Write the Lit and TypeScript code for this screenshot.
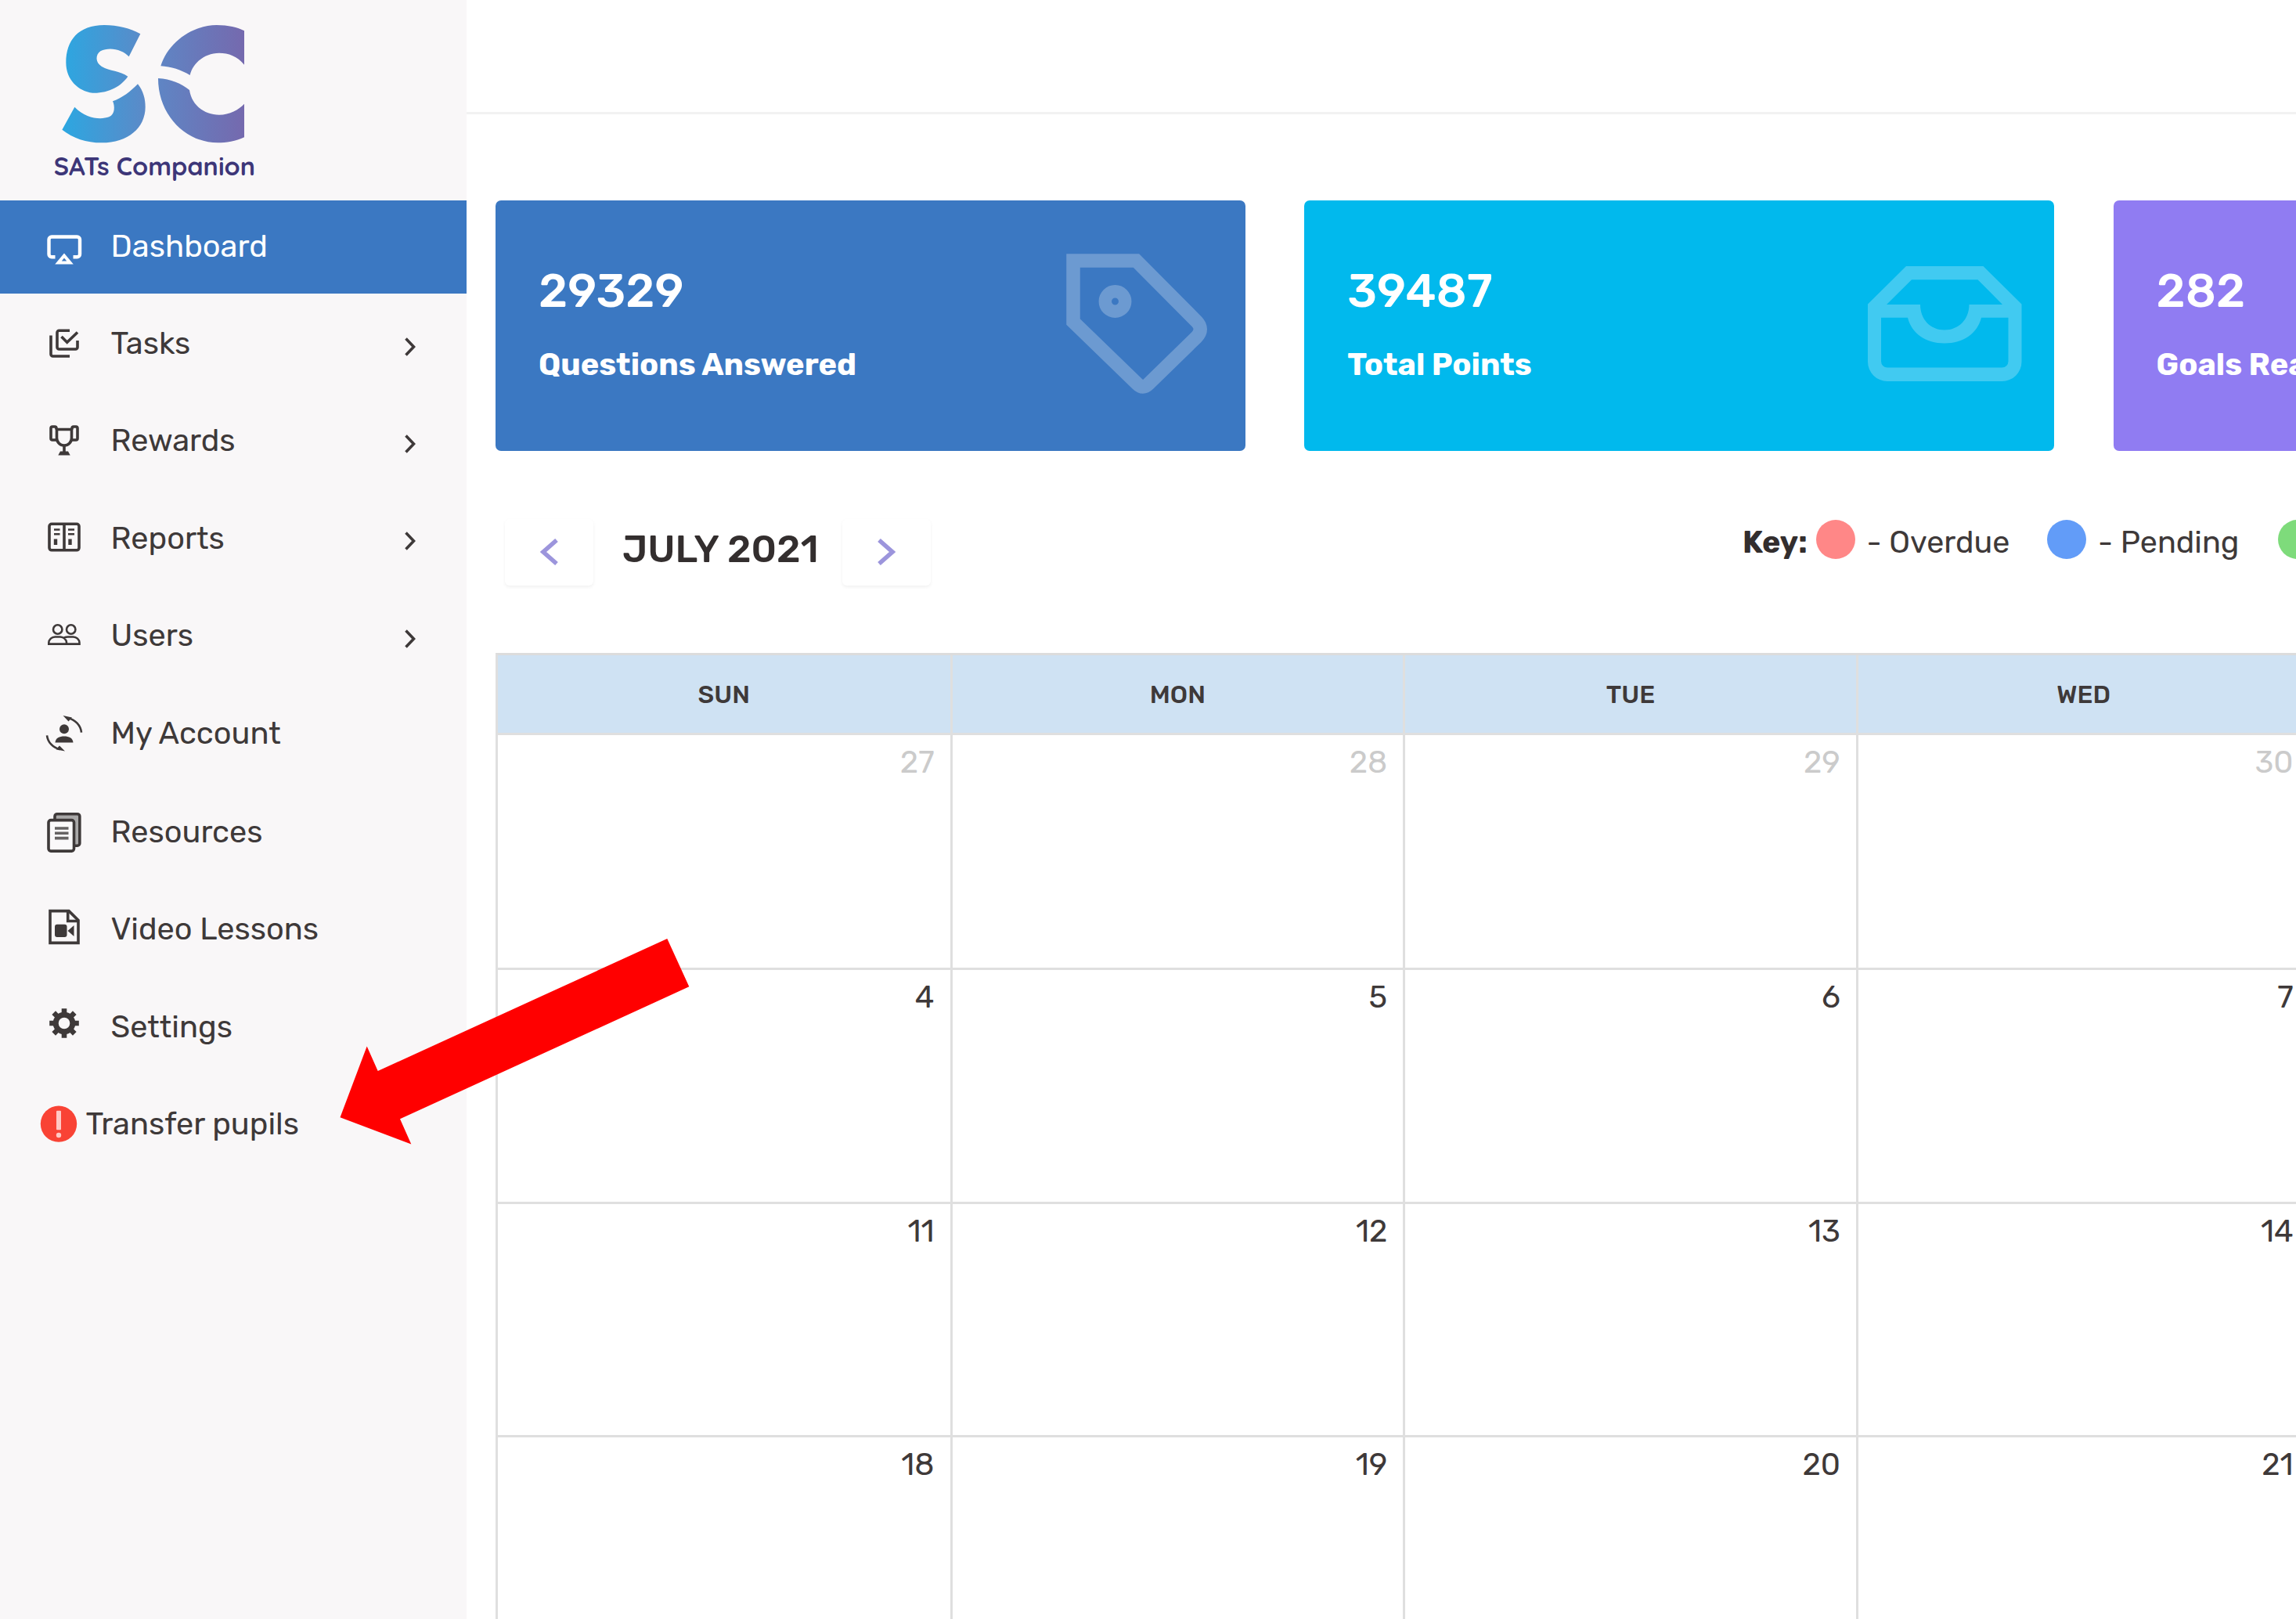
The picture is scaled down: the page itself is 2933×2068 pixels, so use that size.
import { LitElement, css, html, svg } from 'lit'
import { customElement, property, state } from 'lit/decorators.js'
import { map } from 'lit/directives/map.js'
import { classMap } from 'lit/directives/class-map.js'

const icons: Record<string, unknown> = {
    dashboard: svg`
        <path d="M12.500 36.300H8a3.500 3.500 0 0 1-3.500-3.500V14a3.500 3.500 0 0 1 3.500-3.500H40.500a3.500 3.500 0 0 1 3.500 3.500V32.800a3.500 3.500 0 0 1-3.500 3.500H35.500" stroke-width="4.400"/>
        <path d="M24 34.500L16.500 43.500H31.500Z" stroke-width="4"/>`,
    tasks: svg`
        <path d="M31 5.200H17.500a2.500 2.500 0 0 0-2.500 2.500V26.500a2.500 2.500 0 0 0 2.500 2.500H38.500a2.500 2.500 0 0 0 2.500-2.500V18"/>
        <path d="M7 11.500V35.500a2.500 2.500 0 0 0 2.500 2.500H31"/>
        <path d="M20.500 13L27.700 20.300L41 7.500"/>`,
    rewards: svg`
        <path d="M14.500 7.500H33.500V18.500a9.500 9.500 0 0 1-19 0Z"/>
        <path d="M14 7.500V6a2 2 0 0 0-2-2H9a2 2 0 0 0-2 2V19a2 2 0 0 0 2 2h5.500"/>
        <path d="M34 7.500V6a2 2 0 0 1 2-2h3a2 2 0 0 1 2 2V19a2 2 0 0 1-2 2h-5.500"/>
        <path d="M24 28V36" />
        <path d="M19 35.500H29L31.700 40.500H16.300Z" fill="currentColor" stroke="none"/>`,
    reports: svg`
        <rect x="5" y="4.300" width="38" height="33.500" rx="3"/>
        <path d="M24 4V38"/>
        <path d="M11 11.500H18.500M11 17.200H18.500M29 11.500H37M29 17.200H37" stroke-width="2.600"/>
        <path d="M13 23.500V31M31.500 23.500V31" stroke-width="4.400"/>`,
    users: svg`
        <circle cx="15.700" cy="14" r="5.700" stroke-width="2.600"/>
        <circle cx="32.700" cy="14" r="5.700" stroke-width="2.600"/>
        <path d="M4.300 32.600V31a8 8 0 0 1 8-7.500H19a8 8 0 0 1 8 7.500V32.600ZM24 24.500c1.500-.7 3-1 5-1H35.500a8 8 0 0 1 8 7.500V32.600H27" stroke-width="2.600"/>`,
    account: svg`
        <circle cx="24" cy="17.200" r="6" fill="currentColor" stroke="none"/>
        <path d="M12.500 34.600C13 28.500 18 26.500 24 26.500S35 28.500 35.500 34.600Z" fill="currentColor" stroke="none"/>
        <path d="M29 3.200C38 5 45 12.500 46 21.600M2 25.300C3 34 9.500 41 18.500 43.200" stroke-width="2.600"/>
        <path d="M22.500 0L34 2.500L29.500 7.500ZM25 45.500L13.500 43.200L18 38.500Z" fill="currentColor" stroke="none"/>`,
    resources: svg`
        <rect x="12" y="-1.300" width="31.800" height="40.500" rx="3" fill="#a9a8a8"/>
        <rect x="4" y="6.600" width="32.500" height="39.500" rx="3" fill="#faf9fa"/>
        <path d="M12 17H29.500M12 23.300H29.500M12 29.600H29.500" stroke="#666363"/>`,
    video: svg`
        <path d="M6 -1.400H30L42 10.500V39.400H6Z"/>
        <path d="M28.700 -1V11.500H42"/>
        <rect x="12" y="15.800" width="15.500" height="16.200" rx="3" fill="currentColor" stroke="none"/>
        <path d="M28.500 24L36.500 17V31Z" fill="currentColor" stroke="none"/>`,
    settings: svg`
        <circle cx="24" cy="18" r="10.800" stroke-width="7"/>
        <path d="M24 -.8V6M24 30V36.800M5.200 18H12M36 18H42.800M10.700 4.700L15.500 9.500M32.500 26.500L37.300 31.300M10.700 31.300L15.500 26.500M32.500 9.500L37.300 4.700" stroke-width="6.600"/>`,
    alert: svg`
        <circle cx="24" cy="21.600" r="23.200" fill="#f94335" stroke="none"/>
        <rect x="21" y="4.800" width="6" height="24.500" rx="1" fill="#ffc9c4" stroke="none"/>
        <circle cx="24" cy="36" r="3.200" fill="#ffc9c4" stroke="none"/>`,
}

const cardIcons: Record<string, unknown> = {
    tag: svg`
        <path d="M9 9H89.500L166.500 86.500Q176 96.500 166.500 106.500L105 166.500Q98 173.500 91 166.500L9 87Z" fill="none" stroke="currentColor" stroke-width="17.500"/>
        <circle cx="62.500" cy="61" r="12.700" fill="none" stroke="currentColor" stroke-width="16.500"/>`,
    inbox: svg`
        <path fill="currentColor" fill-rule="evenodd" d="M49 0H147.500L196.500 48.500V122a25 25 0 0 1-25 25H25a25 25 0 0 1-25-25V48.500Z
            M56 17.200L24 49H67C67 68 80 81.500 98 81.500S129.500 68 129.500 49H172L140.500 17.200Z
            M17 65.800V121.500a8 8 0 0 0 8 8H171.500a8 8 0 0 0 8-8V65.800H145C140 86 122 98.500 98 98.500S56 86 51 65.800Z"/>`,
}

interface NavItem {
    label: string
    icon: string
    more?: boolean
    alert?: boolean
}

@customElement('side-nav')
export class SideNav extends LitElement {
    static styles = css`
        :host {
            display: block;
            flex: none;
            width: 596px;
            height: 100%;
            background-color: #f9f7f8;
            color: #3e3939;
        }

        .logo {
            display: block;
            width: 300px;
            height: 220px;
            padding: 20px 0 16px 50px;
        }

        .item {
            display: flex;
            align-items: center;
            box-sizing: border-box;
            height: 119.4px;
            margin-bottom: 5px;
            padding: 0 65px 0 58px;
            font-size: 39.7px;
            white-space: nowrap;
        }

        .item.active {
            background-color: #3b78c2;
            color: #fff;
        }

        .item.resources {
            margin-top: 7px;
        }

        .item.alert {
            padding-left: 50.500px;
        }

        .icon {
            flex: none;
            width: 48px;
            height: 48px;
            margin: 1px 35.500px 0 0;
            overflow: visible;
            fill: none;
            stroke: currentColor;
            stroke-width: 3.6;
        }

        .alert .icon {
            margin-right: 11px;
        }

        .label {
            flex: 1;
            padding-bottom: 3px;
        }

        .chevron {
            width: 14px;
            height: 24px;
            margin-top: 5px;
            fill: none;
            stroke: currentColor;
            stroke-width: 3.6;
        }
    `

    @property({ type: Array }) items: NavItem[] = []
    @state() active = 'Dashboard'

    private logo() {
        return html`
            <svg class="logo" viewBox="0 0 900 660">
                <defs>
                    <linearGradient id="brand" gradientUnits="userSpaceOnUse" x1="88" y1="0" x2="786" y2="0">
                        <stop offset="0" stop-color="#2ca7e1"/>
                        <stop offset="0.45" stop-color="#5b8ac8"/>
                        <stop offset="1" stop-color="#7569ae"/>
                    </linearGradient>
                </defs>
                <g fill="url(#brand)">
                    <path d="M388 70C350 48 300 36 250 36C150 36 103 95 103 180C103 245 150 290 205 296C265 298 315 270 340 233C310 212 270 212 240 195C215 180 215 150 235 136C270 118 320 130 344 157Z"/>
                    <path d="M136 350C180 395 235 400 268 388C292 378 290 345 282 328C320 315 350 290 378 262C400 290 407 320 407 350C407 430 340 487 240 487C180 487 130 470 88 437Z"/>
                    <path d="M466 193C495 100 590 36 680 36C725 36 760 45 786 58V188C760 155 725 143 690 143C635 143 590 180 578 228C545 208 505 195 466 193Z"/>
                    <path d="M456 240C505 243 545 260 576 285C585 345 635 380 690 380C730 380 765 360 786 338V466C755 482 715 487 685 487C560 487 456 380 456 240Z"/>
                </g>
                <text x="56" y="611" font-family="Quicksand, Lato, sans-serif" font-weight="700" font-size="97" fill="#3d3678"
                      textLength="772" lengthAdjust="spacingAndGlyphs">SATs Companion</text>
            </svg>`
    }

    render() {
        return html`
            ${this.logo()}
            ${map(this.items, (item) => html`
                <div
                        class="${classMap({
                            item: true,
                            active: item.label == this.active,
                            alert: !!item.alert,
                            resources: item.icon == 'resources',
                        })}"
                        @click="${() => this.active = item.label}"
                >
                    <svg class="icon" viewBox="0 0 48 48">${icons[item.icon]}</svg>
                    <span class="label">${item.label}</span>
                    ${item.more ? html`
                        <svg class="chevron" viewBox="0 0 14 24"><path d="M1.500 1.500L11.500 12L1.500 22.500"/></svg>
                    ` : ''}
                </div>
            `)}`
    }
}

@customElement('stat-card')
export class StatCard extends LitElement {
    static styles = css`
        :host {
            display: flex;
            justify-content: space-between;
            box-sizing: border-box;
            height: 320px;
            padding: 0 48px 0 55px;
            border-radius: 7px;
            color: #fff;
            white-space: nowrap;
        }

        .value {
            padding-top: 80px;
            font-size: 60px;
            font-weight: 500;
            line-height: 72px;
        }

        .label {
            margin-top: 34px;
            font-size: 39.7px;
            font-weight: 700;
            line-height: 48px;
        }

        .art {
            flex: none;
            opacity: 0.25;
        }

        .tag {
            width: 181px;
            height: 180px;
            margin-top: 68px;
        }

        .inbox {
            width: 197px;
            height: 147px;
            margin: 84px -7px 0 0;
        }
    `

    @property() value = ''
    @property() label = ''
    @property() icon = ''

    render() {
        return html`
            <div>
                <div class="value">${this.value}</div>
                <div class="label">${this.label}</div>
            </div>
            ${this.icon == 'tag' ? html`<svg class="art tag" viewBox="0 0 181 180">${cardIcons.tag}</svg>` : ''}
            ${this.icon == 'inbox' ? html`<svg class="art inbox" viewBox="0 0 197 147">${cardIcons.inbox}</svg>` : ''}
        `
    }
}

@customElement('month-calendar')
export class MonthCalendar extends LitElement {
    static styles = css`
        :host {
            display: block;
            color: #3e3939;
        }

        .toolbar {
            display: flex;
            align-items: center;
            height: 85px;
            margin: 0 0 86.500px 12px;
            white-space: nowrap;
        }

        .nav {
            display: flex;
            flex: none;
            align-items: center;
            justify-content: center;
            width: 113px;
            height: 85px;
            padding: 0;
            border: 0;
            border-radius: 6px;
            background-color: #fff;
            box-shadow: 0 2px 4px rgba(0, 0, 0, 0.06);
            color: #9c95dc;
        }

        .nav svg {
            width: 24px;
            height: 34px;
            fill: none;
            stroke: currentColor;
            stroke-width: 5.5;
        }

        .title {
            flex: none;
            box-sizing: border-box;
            width: 317.500px;
            padding: 0 0 8px 37px;
            color: #332e2e;
            font-size: 49.5px;
            font-weight: 500;
        }

        .legend {
            display: flex;
            align-items: center;
            margin-left: 1037.500px;
            padding-bottom: 26px;
            font-size: 39.5px;
        }

        .key {
            flex: none;
            width: 93.500px;
            color: #332e2e;
            font-weight: 700;
        }

        .entry {
            display: flex;
            flex: none;
            align-items: center;
            gap: 15px;
            width: 295.400px;
        }

        .dot {
            width: 50px;
            height: 50px;
            margin-bottom: 7px;
            border-radius: 50%;
        }

        .overdue {
            background-color: #ff8787;
        }

        .pending {
            background-color: #629cf8;
        }

        .complete {
            background-color: #7edb7b;
        }

        .grid {
            display: grid;
            grid-template-columns: 580.500px repeat(3, 578.700px);
            grid-template-rows: 102px 300px repeat(3, 298.600px);
            width: max-content;
            border-top: 3px solid #dcdcdc;
            border-left: 3px solid #dfdfdf;
        }

        .head,
        .day {
            box-sizing: border-box;
            border-right: 3px solid #dfdfdf;
            border-bottom: 3px solid #dfdfdf;
        }

        .head {
            display: flex;
            align-items: center;
            justify-content: center;
            background-color: #cfe2f3;
            font-size: 32.2px;
            font-weight: 500;
        }

        .day {
            padding: 11px 20px 0 0;
            font-size: 39.7px;
            line-height: 47px;
            text-align: right;
        }

        .other {
            color: #cbcbcb;
        }
    `

    @property() month = ''
    @property({ type: Array }) columns: string[] = []
    @property({ type: Array }) days: number[] = []

    private legend() {
        return html`
            <div class="legend">
                <span class="key">Key:</span>
                <div class="entry"><span class="dot overdue"></span>- Overdue</div>
                <div class="entry"><span class="dot pending"></span>- Pending</div>
                <div class="entry"><span class="dot complete"></span></div>
            </div>`
    }

    render() {
        return html`
            <div class="toolbar">
                <button class="nav"><svg viewBox="0 0 24 34"><path d="M21 2L4 17L21 32"/></svg></button>
                <div class="title">${this.month}</div>
                <button class="nav"><svg viewBox="0 0 24 34"><path d="M3 2L20 17L3 32"/></svg></button>
                ${this.legend()}
            </div>
            <div class="grid">
                ${map(this.columns, (name) => html`<div class="head">${name}</div>`)}
                ${map(this.days, (day, i) => html`
                    <div class="${classMap({ day: true, other: i < 4 && day > 7 })}">${day}</div>
                `)}
            </div>`
    }
}

@customElement('app-root')
export class AppRoot extends LitElement {
    static styles = css`
        :host {
            display: flex;
            position: relative;
            width: 100%;
            height: 2068px;
            overflow: hidden;
            background-color: #fff;
            font-family: Rubik, Roboto, sans-serif;
        }

        .main {
            flex: 1;
            min-width: 0;
            overflow: hidden;
        }

        .topbar {
            box-sizing: border-box;
            height: 146px;
            border-bottom: 3px solid #f2f2f2;
        }

        .content {
            padding: 110px 0 0 37px;
        }

        .cards {
            display: grid;
            grid-template-columns: repeat(3, 958px);
            gap: 75.300px;
            margin-bottom: 86.500px;
        }

        .blue {
            background-color: #3b78c2;
        }

        .cyan {
            background-color: #01b9ed;
        }

        .purple {
            background-color: #907cf2;
        }

        .pointer {
            position: absolute;
            left: 434px;
            top: 1199px;
            width: 447px;
            height: 263px;
        }
    `

    @state() items: NavItem[] = [
        { label: 'Dashboard', icon: 'dashboard' },
        { label: 'Tasks', icon: 'tasks', more: true },
        { label: 'Rewards', icon: 'rewards', more: true },
        { label: 'Reports', icon: 'reports', more: true },
        { label: 'Users', icon: 'users', more: true },
        { label: 'My Account', icon: 'account' },
        { label: 'Resources', icon: 'resources' },
        { label: 'Video Lessons', icon: 'video' },
        { label: 'Settings', icon: 'settings' },
        { label: 'Transfer pupils', icon: 'alert', alert: true },
    ]

    @state() days = [
        27, 28, 29, 30,
        4, 5, 6, 7,
        11, 12, 13, 14,
        18, 19, 20, 21,
    ]

    render() {
        return html`
            <side-nav .items="${this.items}"></side-nav>
            <div class="main">
                <div class="topbar"></div>
                <div class="content">
                    <div class="cards">
                        <stat-card class="blue" value="29329" label="Questions Answered" icon="tag"></stat-card>
                        <stat-card class="cyan" value="39487" label="Total Points" icon="inbox"></stat-card>
                        <stat-card class="purple" value="282" label="Goals Reached"></stat-card>
                    </div>
                    <month-calendar
                            month="JULY 2021"
                            .columns="${['SUN', 'MON', 'TUE', 'WED']}"
                            .days="${this.days}"
                    ></month-calendar>
                </div>
            </div>
            <svg class="pointer" viewBox="434 1199 447 263">
                <path fill="#f00" d="M852.300 1199L880.300 1260.300L511 1429.300L525.300 1461.500L434.500 1427.300L468.700 1336.500L482.700 1368Z"/>
            </svg>`
    }
}

declare global {
    interface HTMLElementTagNameMap {
        'app-root': AppRoot
        'side-nav': SideNav
        'stat-card': StatCard
        'month-calendar': MonthCalendar
    }
}
